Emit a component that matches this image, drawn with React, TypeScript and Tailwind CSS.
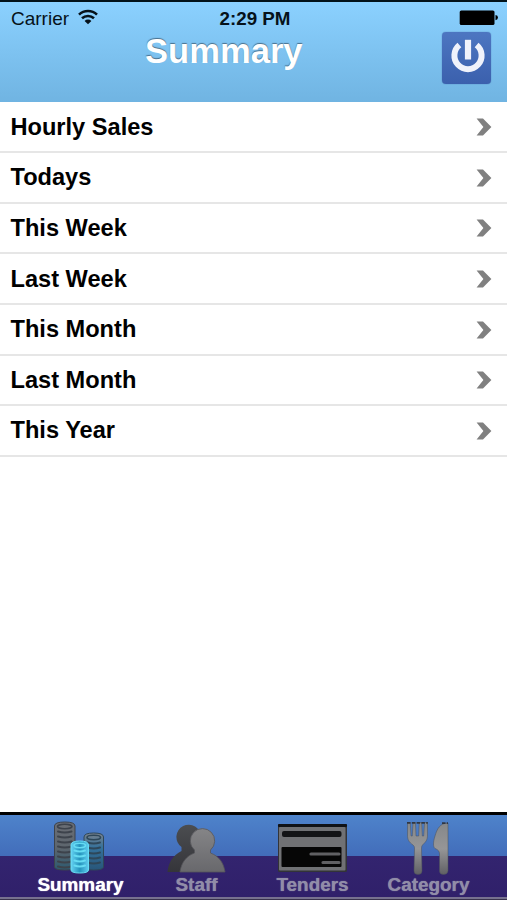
import type { ReactNode } from "react";

const rows = [
  "Hourly Sales",
  "Todays",
  "This Week",
  "Last Week",
  "This Month",
  "Last Month",
  "This Year",
];

function WifiIcon() {
  return (
    <svg className="h-4 w-5" viewBox="0 0 20 16" fill="none" stroke="#06121a" strokeWidth="2.6">
      <path d="M1 5.6A13 13 0 0 1 19 5.6" />
      <path d="M4 9.3A8.8 8.8 0 0 1 16 9.3" />
      <path d="M10 15.2 6.6 12A4.8 4.8 0 0 1 13.4 12Z" fill="#06121a" stroke="none" />
    </svg>
  );
}

function BatteryIcon() {
  return (
    <svg className="h-4 w-10" viewBox="0 0 40 16" fill="#000">
      <rect x="0.7" y="0.4" width="34.8" height="14.6" rx="1.6" />
      <path d="M36.5 5Q39 5.4 39 7.6T36.5 10.2Z" />
    </svg>
  );
}

function PowerIcon() {
  return (
    <svg className="h-[52px] w-[49px]" viewBox="0 0 49 52" fill="none">
      <path d="M17.4 13A13.6 13.6 0 1 0 34.6 13" stroke="#f0f2fb" strokeWidth="6" />
      <path d="M26 7.8V27.5" stroke="#f0f2fb" strokeWidth="6.2" />
    </svg>
  );
}

function Chevron() {
  return (
    <svg className="mt-px h-[18px] w-4" viewBox="0 0 16 18">
      <path d="M0.6 0.6H7L15.4 9 7 17.4H0.6L7.4 9Z" fill="#808080" />
    </svg>
  );
}

type StackProps = {
  x: number;
  top: number;
  bottom: number;
  width: number;
  fill: string;
  line: string;
};

function CoinStack({ x, top, bottom, width, fill, line }: StackProps) {
  const rx = width / 2;
  const count = Math.floor((bottom - top - 8) / 5);

  return (
    <g fill={fill} stroke={line} strokeWidth="1">
      <path
        d={`M${x} ${top + 4}Q${x} ${top} ${x + rx} ${top}T${x + width} ${top + 4}V${bottom - 3}Q${x + width} ${bottom} ${x + rx} ${bottom}T${x} ${bottom - 3}Z`}
      />
      {Array.from({ length: count }, (_, i) => (
        <path
          key={i}
          d={`M${x + 3.5} ${top + 9.5 + i * 5}Q${x + rx} ${top + 11.5 + i * 5} ${x + width - 3.5} ${top + 9.5 + i * 5}`}
          fill="none"
          strokeWidth="2"
          strokeLinecap="round"
        />
      ))}
      <ellipse cx={x + rx} cy={top + 4.5} rx={rx - 3} ry="2.2" fill="none" strokeWidth="1.6" />
    </g>
  );
}

function SummaryIcon() {
  return (
    <svg className="h-14 w-[116px]" viewBox="0 0 116 56">
      <defs>
        <linearGradient id="stack" x1="0" y1="0" x2="0" y2="1">
          <stop offset="0" stopColor="#6b6e75" />
          <stop offset="0.55" stopColor="#5c656d" />
          <stop offset="1" stopColor="#2d5a70" />
        </linearGradient>
        <linearGradient id="stackRight" x1="0" y1="0" x2="0" y2="1">
          <stop offset="0" stopColor="#7b828c" />
          <stop offset="0.4" stopColor="#34719b" />
          <stop offset="1" stopColor="#285679" />
        </linearGradient>
        <linearGradient id="glow" x1="0" y1="0" x2="1" y2="0">
          <stop offset="0" stopColor="#66d3f3" />
          <stop offset="0.5" stopColor="#2494bd" />
          <stop offset="1" stopColor="#5fcdf0" />
        </linearGradient>
      </defs>
      <CoinStack x={32.5} top={2} bottom={50} width={20.5} fill="url(#stack)" line="#3d434c" />
      <CoinStack x={62} top={13} bottom={50} width={19.5} fill="url(#stackRight)" line="#2e4759" />
      <CoinStack x={49} top={21} bottom={53} width={17.5} fill="url(#glow)" line="#66dcf3" />
    </svg>
  );
}

function StaffIcon() {
  return (
    <svg className="h-14 w-[116px]" viewBox="0 0 116 56">
      <defs>
        <linearGradient id="back" x1="0" y1="0" x2="0" y2="1">
          <stop offset="0" stopColor="#4b4d50" />
          <stop offset="1" stopColor="#35353a" />
        </linearGradient>
        <linearGradient id="front" x1="0" y1="0" x2="0" y2="1">
          <stop offset="0" stopColor="#858587" />
          <stop offset="1" stopColor="#68686c" />
        </linearGradient>
      </defs>
      <path
        d="M29.5 52C30.5 42 35 35.5 43.5 31V27A12.3 12.3 0 1 1 63 17V52Z"
        fill="url(#back)"
      />
      <path
        d="M42 52C43.5 42 48.5 36 56.5 33V30A12.2 12.2 0 1 1 72.5 30V33C80.5 36 85.5 42 87 52Z"
        fill="url(#front)"
        stroke="#55565a"
        strokeWidth="0.8"
      />
    </svg>
  );
}

function TendersIcon() {
  return (
    <svg className="h-14 w-[116px]" viewBox="0 0 116 56">
      <rect x="24" y="4" width="69" height="48" rx="1.5" fill="#333438" />
      <rect x="25" y="7" width="66.5" height="43.5" rx="1" fill="#707174" />
      <rect x="24" y="4" width="69" height="3" rx="1" fill="#101216" />
      <rect x="28" y="11" width="59.5" height="6" rx="2" fill="#131416" />
      <rect x="27.5" y="27" width="60" height="20" rx="1" fill="#060606" />
      <path d="M57 34H85M69 42.5H85" stroke="#606063" strokeWidth="3.2" strokeLinecap="round" />
    </svg>
  );
}

function CategoryIcon() {
  return (
    <svg className="h-14 w-[116px]" viewBox="0 0 116 56">
      <defs>
        <linearGradient id="cutlery" x1="0" y1="0" x2="0" y2="1">
          <stop offset="0" stopColor="#858789" />
          <stop offset="0.5" stopColor="#969697" />
          <stop offset="1" stopColor="#606064" />
        </linearGradient>
      </defs>
      <g fill="url(#cutlery)" stroke="#4a505b" strokeWidth="0.5">
        <path d="M37.5 2.5H40.3L41 16H42.3L43 2.5H45.5L46 16H48.7L49.2 2.5H51.7L52.3 16H53.7L54.5 2.5H57.5V15C57.5 20.5 55.5 22 52.5 25Q51.5 26 51.5 28L52 51Q52 54.5 48 54.5T44 51L44.5 28Q44.5 26 43 25C39 22 37.5 20 37.5 15Z" />
        <path d="M78 3C70 3 67 9 65 16C63 22 63 27 65 28.5Q69.5 30 69.5 34V51Q69.5 54.5 73.5 54.5T78 51Z" />
      </g>
      <path
        d="M37 2.8H57.8M72 3.2H78"
        stroke="#303743"
        strokeWidth="1.8"
        strokeDasharray="3.5 1.3"
      />
    </svg>
  );
}

type TabProps = {
  label: string;
  icon: ReactNode;
  active?: boolean;
};

function Tab({ label, icon, active = false }: TabProps) {
  return (
    <button className="flex flex-col items-center pt-[5px]" type="button">
      {icon}
      <span
        className={`-mt-0.5 pl-px text-[18.9px] leading-[22px] font-bold ${
          active
            ? "text-white [text-shadow:0_0_1px_#fff]"
            : "text-[#918da8] [text-shadow:0_0_1px_#918da8]"
        }`}
      >
        {label}
      </span>
    </button>
  );
}

export default function App() {
  return (
    <div className="flex h-[900px] w-[507px] flex-col overflow-hidden bg-white font-['Liberation_Sans',Arial,sans-serif] text-black">
      <header className="h-[102.4px] shrink-0 border-t-2 border-[#02121a] bg-linear-to-b from-[#8bd1ff] to-[#70b4e2]">
        <div className="grid h-[30px] grid-cols-3 items-center pt-1 pr-2 pl-[11px] text-[19px] leading-5 text-[#06121a]">
          <div className="flex items-center gap-[9px]">
            <span>Carrier</span>
            <span className="-mt-1">
              <WifiIcon />
            </span>
          </div>
          <span className="text-center text-[18.8px] font-bold">2:29 PM</span>
          <span className="-mt-0.5 flex justify-end">
            <BatteryIcon />
          </span>
        </div>
        <div className="flex justify-between pr-4 pl-[145px]">
          <h1 className="text-[34.6px] leading-[38px] font-bold text-white [text-shadow:0_-1.5px_1px_#496f8b]">
            Summary
          </h1>
          <button
            aria-label="Power"
            className="h-[52px] w-[49px] rounded bg-linear-to-b from-[#4d76c1] to-[#3b60ad] shadow-[0_0_1px_#345694]"
            type="button"
          >
            <PowerIcon />
          </button>
        </div>
      </header>

      <ul className="flex-1">
        {rows.map((row) => (
          <li
            className="flex h-[50.64px] items-center justify-between border-b-2 border-[#e6e6e6] pr-[15px] pl-[10.5px]"
            key={row}
          >
            <span className="text-[23.6px] leading-7 font-bold">{row}</span>
            <Chevron />
          </li>
        ))}
      </ul>

      <nav className="h-[88px] shrink-0 border-t-[3px] border-black bg-[linear-gradient(to_bottom,#4e83cb_0px,#426dba_41px,#33246f_41px,#30206a_82px,#77718f_82px,#77718f_84px,#3a334d_84px)]">
        <div className="grid grid-cols-[repeat(4,116px)] pl-[22px]">
          <Tab label="Summary" icon={<SummaryIcon />} active />
          <Tab label="Staff" icon={<StaffIcon />} />
          <Tab label="Tenders" icon={<TendersIcon />} />
          <Tab label="Category" icon={<CategoryIcon />} />
        </div>
      </nav>
    </div>
  );
}
